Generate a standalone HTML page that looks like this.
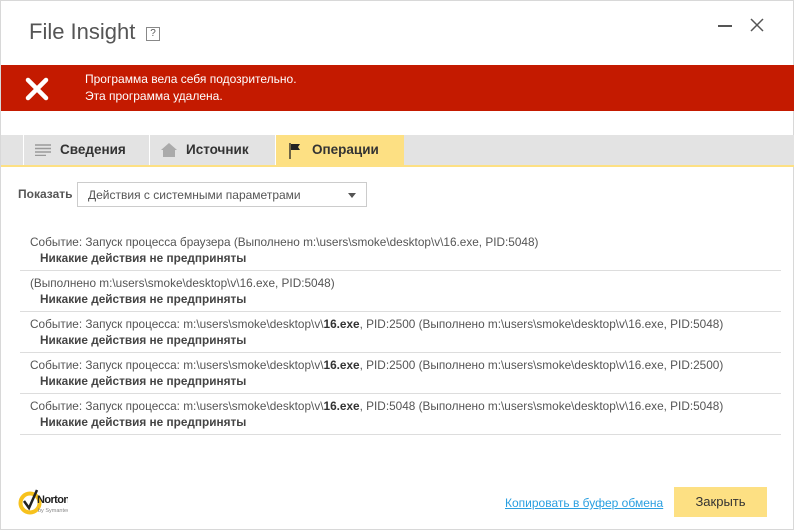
<!DOCTYPE html>
<html><head><meta charset="utf-8"><style>
*{margin:0;padding:0;box-sizing:border-box}
body{width:794px;height:530px;background:#fff;font-family:"Segoe UI","Liberation Sans","DejaVu Sans",sans-serif;position:relative;overflow:hidden;border:1px solid #d8d8d8;color:#444}
.abs{position:absolute}
.title{left:28px;top:18px;font-size:22px;color:#555}
.help{left:145px;top:26px;width:14px;height:14px;border:1px solid #888;font-size:10px;text-align:center;line-height:12px;color:#555}
.red{left:0;top:64px;width:794px;height:46px;background:#c41a00;color:#fff;font-size:12px}
.tabs{left:0;top:134px;width:794px;height:30px;background:#e3e3e3}
.tab{position:absolute;top:0;height:30px;font-weight:bold;font-size:13.5px;color:#333;line-height:30px;border-left:1px solid #fff}
.yl{left:0;top:164px;width:794px;height:2px;background:#fde083}
.row{position:absolute;left:19px;width:761px;border-bottom:1px solid #ddd;height:41px;font-size:11.8px;color:#555}
.row .a{position:absolute;left:10px;top:5px;white-space:nowrap}
.row .b{position:absolute;left:20px;top:21px;font-weight:bold;color:#444}
</style></head><body>
<div class="abs title">File Insight</div>
<div class="abs help">?</div>
<svg class="abs" style="left:748px;top:16px" width="16" height="16"><path d="M2 2L14 14M14 2L2 14" stroke="#555" stroke-width="1.5"/></svg>
<div class="abs" style="left:717px;top:24px;width:14px;height:1.5px;background:#555"></div>
<div class="abs red">
<svg class="abs" style="left:24px;top:12px" width="24" height="24"><path d="M3 3L21 21M21 3L3 21" stroke="#fff" stroke-width="4.5" stroke-linecap="round"/></svg>
<div class="abs" style="left:84px;top:6px;line-height:17px">Программа вела себя подозрительно.<br>Эта программа удалена.</div>
</div>
<div class="abs tabs">
<div class="tab" style="left:22px;width:126px"><svg class="abs" style="left:11px;top:9px" width="16" height="12"><path d="M0 1H16M0 4.5H16M0 8H16M0 11.5H11" stroke="#999" stroke-width="1.5"/></svg><span style="margin-left:36px">Сведения</span></div>
<div class="tab" style="left:148px;width:126px"><svg class="abs" style="left:11px;top:8px" width="16" height="14"><path d="M8 0L0 7H2V14H14V7H16Z" fill="#aaa"/></svg><span style="margin-left:36px">Источник</span></div>
<div class="tab" style="left:274px;width:129px;background:#fde083"><svg class="abs" style="left:13px;top:8px" width="14" height="16"><path d="M1 0V16" stroke="#222" stroke-width="1.3"/><path d="M2 1H11L9 4L11 7H2Z" fill="#222"/></svg><span style="margin-left:36px">Операции</span></div>
</div>
<div class="abs yl"></div>
<div class="abs" style="left:17px;top:186px;font-size:12px;font-weight:bold;color:#555">Показать</div>
<div class="abs" style="left:76px;top:181px;width:290px;height:25px;border:1px solid #ccc;font-size:12px;color:#555;padding:5px 10px">Действия с системными параметрами<span class="abs" style="right:10px;top:10px;border:4px solid transparent;border-top:5px solid #555"></span></div>
<div class="row" style="top:229px"><div class="a">Событие: Запуск процесса браузера (Выполнено m:\users\smoke\desktop\v\16.exe, PID:5048)</div><div class="b">Никакие действия не предприняты</div></div>
<div class="row" style="top:270px"><div class="a">(Выполнено m:\users\smoke\desktop\v\16.exe, PID:5048)</div><div class="b">Никакие действия не предприняты</div></div>
<div class="row" style="top:311px"><div class="a">Событие: Запуск процесса: m:\users\smoke\desktop\v\<b style="color:#333">16.exe</b>, PID:2500 (Выполнено m:\users\smoke\desktop\v\16.exe, PID:5048)</div><div class="b">Никакие действия не предприняты</div></div>
<div class="row" style="top:352px"><div class="a">Событие: Запуск процесса: m:\users\smoke\desktop\v\<b style="color:#333">16.exe</b>, PID:2500 (Выполнено m:\users\smoke\desktop\v\16.exe, PID:2500)</div><div class="b">Никакие действия не предприняты</div></div>
<div class="row" style="top:393px"><div class="a">Событие: Запуск процесса: m:\users\smoke\desktop\v\<b style="color:#333">16.exe</b>, PID:5048 (Выполнено m:\users\smoke\desktop\v\16.exe, PID:5048)</div><div class="b">Никакие действия не предприняты</div></div>
<svg class="abs" style="left:17px;top:485px" width="50" height="32"><circle cx="12" cy="17" r="9.5" fill="none" stroke="#f7c21d" stroke-width="4"/><path d="M6 15L11 22L19 4" fill="none" stroke="#222" stroke-width="2.5"/><text x="19" y="17" font-size="11" font-weight="bold" font-family="Liberation Sans" fill="#222" letter-spacing="-0.6">Norton</text><text x="20" y="26" font-size="5.5" font-family="Liberation Sans" fill="#888">by Symantec</text></svg>
<div class="abs" style="left:504px;top:495px;font-size:12px;color:#2a9fe0;text-decoration:underline">Копировать в буфер обмена</div>
<div class="abs" style="left:673px;top:486px;width:93px;height:30px;background:#fde083;font-size:13px;color:#333;text-align:center;line-height:30px">Закрыть</div>
</body></html>
